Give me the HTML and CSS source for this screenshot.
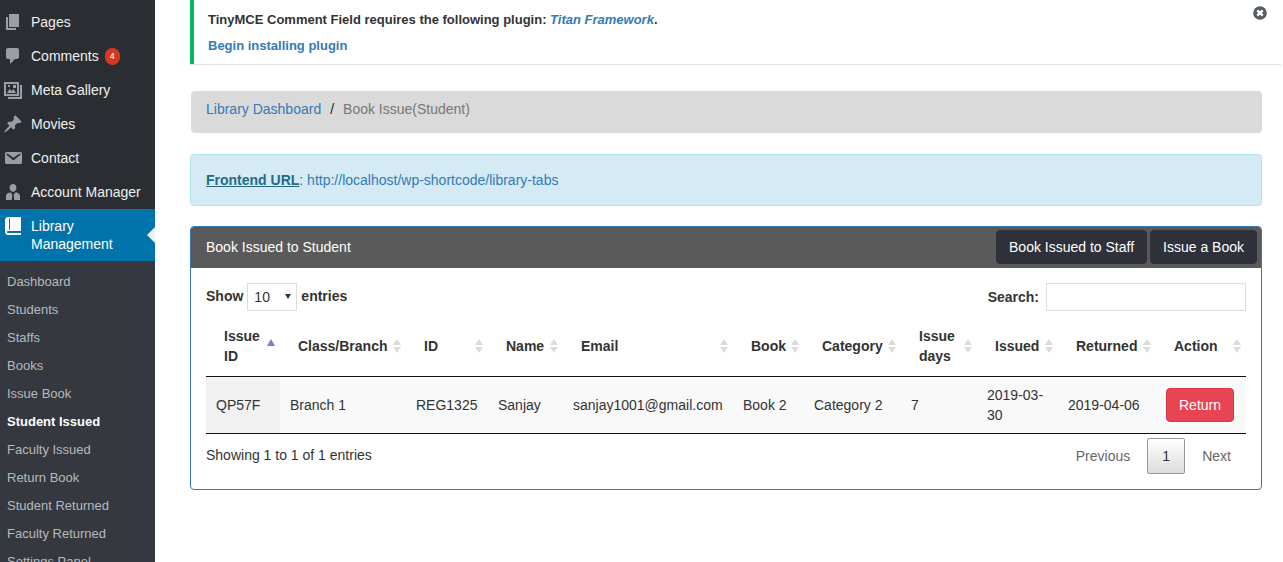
FILE: index.html
```html
<!DOCTYPE html>
<html lang="en">
<head>
<meta charset="utf-8">
<title>Book Issue</title>
<link rel="stylesheet" href="styles.css">
</head>
<body>
<div class="layout">
  <nav class="sidebar">
    <ul class="menu">
      <li class="menu-item"><span class="menu-icon"><svg viewBox="0 0 20 20" width="20" height="20"><path d="M6 15V2h10v13H6zm-1 1h8v2H3V5h2v11z"/></svg></span><span>Pages</span></li>
      <li class="menu-item"><span class="menu-icon"><svg viewBox="0 0 20 20" width="20" height="20"><path d="M5 2h9c1.100 0 2 .9 2 2v7c0 1.100-.9 2-2 2h-2l-5 5v-5H5c-1.100 0-2-.9-2-2V4c0-1.100.9-2 2-2z"/></svg></span><span>Comments</span><span class="badge">4</span></li>
      <li class="menu-item"><span class="menu-icon"><svg viewBox="0 0 20 20" width="20" height="20"><path fill-rule="evenodd" d="M1 2h15v14H1zM3 4v10h11V4z"/><path d="M17 5h2v14H5v-2h12z"/><path d="M4 13l2.500-4 2 2 2-2 2.500 4zM5 5h2v2H5zM10 5h3v3h-3z"/></svg></span><span>Meta Gallery</span></li>
      <li class="menu-item"><span class="menu-icon"><svg viewBox="0 0 20 20" width="20" height="20"><path d="M10.440 3.020l1.820-1.820 6.360 6.350-1.830 1.820c-1.050-.68-2.480-.57-3.410.36l-.75.75c-.92.93-1.040 2.350-.35 3.410l-1.830 1.820-2.410-2.410-2.800 2.790c-.42.42-3.380 2.710-3.800 2.290s1.860-3.390 2.280-3.810l2.790-2.790L4.100 9.360l1.830-1.820c1.050.69 2.480.57 3.400-.36l.75-.75c.93-.92 1.050-2.350.36-3.410z"/></svg></span><span>Movies</span></li>
      <li class="menu-item"><span class="menu-icon"><svg viewBox="0 0 20 20" width="20" height="20"><path d="M3.870 4h13.250C18.370 4 19 4.590 19 5.790v8.420c0 1.190-.63 1.790-1.880 1.790H3.870c-1.250 0-1.880-.6-1.880-1.790V5.790c0-1.200.63-1.790 1.880-1.790zm6.620 8.600l6.740-5.530c.24-.2.43-.66.13-1.070-.29-.41-.82-.42-1.170-.17l-5.700 3.860L4.800 5.830c-.35-.25-.88-.24-1.170.17-.3.41-.11.87.13 1.070z"/></svg></span><span>Contact</span></li>
      <li class="menu-item"><span class="menu-icon"><svg viewBox="0 0 20 20" width="20" height="20"><path d="M10 2c2 0 3.400 1.600 3.400 3.700S12 9.800 10 9.800 6.600 7.800 6.600 5.700 8 2 10 2z"/><path d="M7.300 10.200L9.300 12.500 8.800 18H3v-4.300c0-2 2-3 4.300-3.500zM12.700 10.200c2.300.5 4.300 1.500 4.300 3.500V18h-5.800l-.5-5.500z"/></svg></span><span>Account Manager</span></li>
      <li class="menu-item current"><span class="menu-icon"><svg viewBox="0 0 20 20" width="20" height="20"><path d="M5 17h13v2H5c-1.660 0-3-1.340-3-3V4c0-1.660 1.340-3 3-3h13v14H5c-.55 0-1 .45-1 1s.45 1 1 1zm2-3.500v-11c0-.28-.22-.5-.5-.5s-.5.22-.5.5v11c0 .28.22.5.5.5s.5-.22.5-.5z"/></svg></span><span class="menu-label">Library<br>Management</span></li>
    </ul>
    <ul class="submenu">
      <li>Dashboard</li>
      <li>Students</li>
      <li>Staffs</li>
      <li>Books</li>
      <li>Issue Book</li>
      <li class="active">Student Issued</li>
      <li>Faculty Issued</li>
      <li>Return Book</li>
      <li>Student Returned</li>
      <li>Faculty Returned</li>
      <li>Settings Panel</li>
    </ul>
  </nav>

  <main class="content">
    <div class="notice">
      <p class="notice-line"><strong>TinyMCE Comment Field requires the following plugin: <a href="#"><em>Titan Framework</em></a>.</strong></p>
      <p class="notice-line notice-action"><a href="#"><strong>Begin installing plugin</strong></a></p>
      <svg class="notice-close" viewBox="0 0 14 14" width="14" height="14"><circle cx="7" cy="7" r="6.800" fill="#555d66"/><path d="M4.300 4.300l5.400 5.400M9.700 4.300l-5.400 5.400" stroke="#fff" stroke-width="2.400"/></svg>
    </div>

    <div class="page">
      <ol class="breadcrumb">
        <li><a href="#">Library Dashboard</a></li>
        <li class="sep">/</li>
        <li class="crumb-current">Book Issue(Student)</li>
      </ol>

      <div class="alert"><a class="alert-label" href="#">Frontend URL</a>: <a href="#">http://localhost/wp-shortcode/library-tabs</a></div>

      <section class="panel">
        <header class="panel-heading">
          <h3 class="panel-title">Book Issued to Student</h3>
          <div class="panel-actions">
            <a class="btn-dark" href="#">Book Issued to Staff</a>
            <a class="btn-dark" href="#">Issue a Book</a>
          </div>
        </header>
        <div class="panel-body">
          <div class="table-tools">
            <label class="tool-label show">Show <span class="select">10<i class="select-arrow"></i></span> entries</label>
            <label class="tool-label search">Search: <input class="search-input" type="text"></label>
          </div>
          <table class="data">
            <colgroup>
              <col class="c1"><col class="c2"><col class="c3"><col class="c4"><col class="c5"><col class="c6"><col class="c7"><col class="c8"><col class="c9"><col class="c10"><col class="c11">
            </colgroup>
            <thead>
              <tr>
                <th class="sorted">Issue<br>ID</th>
                <th>Class/Branch</th>
                <th>ID</th>
                <th>Name</th>
                <th>Email</th>
                <th>Book</th>
                <th>Category</th>
                <th>Issue<br>days</th>
                <th>Issued</th>
                <th>Returned</th>
                <th>Action</th>
              </tr>
            </thead>
            <tbody>
              <tr>
                <td class="cell-sorted">QP57F</td>
                <td>Branch 1</td>
                <td>REG1325</td>
                <td>Sanjay</td>
                <td>sanjay1001@gmail.com</td>
                <td>Book 2</td>
                <td>Category 2</td>
                <td>7</td>
                <td>2019-03-30</td>
                <td>2019-04-06</td>
                <td><a class="btn-return" href="#">Return</a></td>
              </tr>
            </tbody>
          </table>
          <div class="table-foot">
            <span class="info">Showing 1 to 1 of 1 entries</span>
            <div class="pager">
              <span class="pager-link prev">Previous</span>
              <span class="pager-current">1</span>
              <span class="pager-link next">Next</span>
            </div>
          </div>
        </div>
      </section>
    </div>
  </main>
</div>
</body>
</html>
```
FILE: styles.css
```css
* { box-sizing: border-box; }
html, body { height: 100%; }
body {
  margin: 0;
  overflow: hidden;
  background: #fff;
  color: #333;
  font: 14px/20px "Liberation Sans", Arial, sans-serif;
}
a { color: #337ab7; text-decoration: none; }
ul, ol { list-style: none; margin: 0; padding: 0; }

.layout { display: flex; height: 562px; overflow: hidden; }

/* sidebar */
.sidebar {
  flex: 0 0 155px;
  height: 562px;
  overflow: hidden;
  background: #35393f;
}
.menu { background: #2a2e33; padding-top: 5px; }
.menu-item {
  position: relative;
  display: flex;
  align-items: center;
  min-height: 34px;
  color: #eee;
  line-height: 18px;
}
.menu-icon {
  flex: 0 0 31px;
  padding-left: 3px;
  fill: #9a9ea3;
}
.menu-icon svg { display: block; width: 20px; height: 20px; }
.badge {
  width: 15px;
  height: 17px;
  margin-left: 6px;
  border-radius: 8px;
  background: #d63a1e;
  color: #fff;
  font-size: 9px;
  line-height: 17px;
  text-align: center;
}
.current {
  align-items: flex-start;
  height: 52px;
  padding-top: 8px;
  background: #0073aa;
  color: #fff;
}
.current .menu-icon { margin-top: -1px; fill: #fff; }
.current::after {
  content: "";
  position: absolute;
  right: 0;
  top: 18px;
  border: 8px solid transparent;
  border-right-color: #f1f1f1;
  border-left-width: 0;
}
.submenu { padding-top: 7px; }
.submenu li {
  height: 28px;
  padding-left: 7px;
  color: #b4b9be;
  font-size: 13px;
  line-height: 28px;
}
.submenu .active { color: #fff; font-weight: 700; }

/* main */
.content { flex: 1; min-width: 0; padding: 0 2px 0 35px; }
.notice {
  position: relative;
  height: 64px;
  padding: 10px 12px 0 14px;
  border-left: 4px solid #00b95d;
  background: #fff;
  box-shadow: 0 1px 1px rgba(0, 0, 0, .1);
  font-size: 13px;
}
.notice-line { margin: 0; line-height: 20px; }
.notice-action { margin-top: 6px; }
.notice-close { position: absolute; top: 6px; right: 14px; }

.page { width: 1072px; padding-top: 27px; }
.breadcrumb {
  display: flex;
  height: 42px;
  margin-left: 1px;
  padding: 8px 15px;
  border-radius: 4px;
  background: #dadada;
}
.sep { padding: 0 9px; color: #222; }
.crumb-current { color: #777; }

.alert {
  height: 52px;
  margin-top: 21px;
  padding: 15px;
  border: 1px solid #aee4ee;
  border-radius: 4px;
  background: #d4eaf5;
  color: #31708f;
}
.alert-label { color: #246b87; font-weight: 700; text-decoration: underline; }

.panel {
  height: 264px;
  margin-top: 20px;
  border: 1px solid #337ab7;
  border-radius: 4px;
  overflow: hidden;
}
.panel-heading {
  display: flex;
  justify-content: space-between;
  align-items: flex-start;
  height: 41px;
  padding: 3px 4px 0 15px;
  background: #5a5a5a;
  color: #fff;
}
.panel-title { margin: 7px 0 0; font-size: 14px; font-weight: 400; }
.panel-actions { display: flex; gap: 3px; }
.btn-dark {
  height: 34px;
  padding: 6px 12px;
  border: 1px solid #2e3139;
  border-radius: 4px;
  background: #2e3139;
  color: #fff;
}
.panel-body { padding: 15px 15px 0; }
.table-tools { display: flex; justify-content: space-between; align-items: center; height: 28px; }
.tool-label { display: flex; align-items: center; gap: 3px; font-weight: 700; }
.show { line-height: 26px; height: 28px; align-items: flex-start; }
.search { gap: 7px; }
.select {
  position: relative;
  width: 50px;
  height: 28px;
  margin: 0 1px;
  padding-left: 6px;
  border: 1px solid #ddd;
  font-weight: 400;
  font-size: 14px;
  line-height: 27px;
}
.select-arrow {
  position: absolute;
  right: 5px;
  top: 10px;
  border: 3px solid transparent;
  border-top: 5px solid #333;
  border-bottom-width: 0;
}
.search-input { width: 200px; height: 28px; margin: 0; padding: 0 6px; border: 1px solid #ddd; background: #fff; }

.data { width: 1040px; margin-top: 5px; border-collapse: collapse; table-layout: fixed; }
.c1 { width: 74px; } .c2 { width: 126px; } .c3 { width: 82px; } .c4 { width: 75px; }
.c5 { width: 170px; } .c6 { width: 71px; } .c7 { width: 97px; } .c8 { width: 76px; }
.c9 { width: 81px; } .c10 { width: 98px; } .c11 { width: 90px; }
.data th {
  position: relative;
  height: 60px;
  padding: 0 18px;
  border-bottom: 1px solid #111;
  font-weight: 700;
  text-align: left;
  white-space: nowrap;
}
.data th::before, .data th::after {
  content: "";
  position: absolute;
  right: 5px;
  border: 4px solid transparent;
}
.data th::before { top: 23px; border-top: 0; border-bottom: 6px solid #dcdcdc; }
.data th::after { top: 31px; border-bottom: 0; border-top: 6px solid #dcdcdc; }
.data th.sorted::before { top: 23px; border-bottom: 7px solid #8a74cc; }
.data th.sorted::after { display: none; }
.data td {
  height: 57px;
  padding: 8px 10px;
  border-bottom: 1px solid #111;
  background: #f9f9f9;
  vertical-align: middle;
}
.data td.cell-sorted { background: #f1f1f1; }
.btn-return {
  display: block;
  width: 68px;
  height: 34px;
  padding: 6px 0;
  border: 1px solid #dc3545;
  border-radius: 4px;
  background: #e94452;
  color: #fff;
  text-align: center;
}
.table-foot { display: flex; justify-content: space-between; align-items: flex-start; padding-top: 4px; }
.info { padding-top: 7px; }
.pager { display: flex; align-items: center; }
.pager-link { padding: 8px 15px; color: #666; }
.prev { padding-right: 17px; }
.next { padding-left: 17px; }
.pager-current {
  width: 38px;
  height: 36px;
  border: 1px solid #979797;
  border-radius: 2px;
  background: linear-gradient(#fff, #dcdcdc);
  line-height: 34px;
  text-align: center;
  color: #333;
}
```
